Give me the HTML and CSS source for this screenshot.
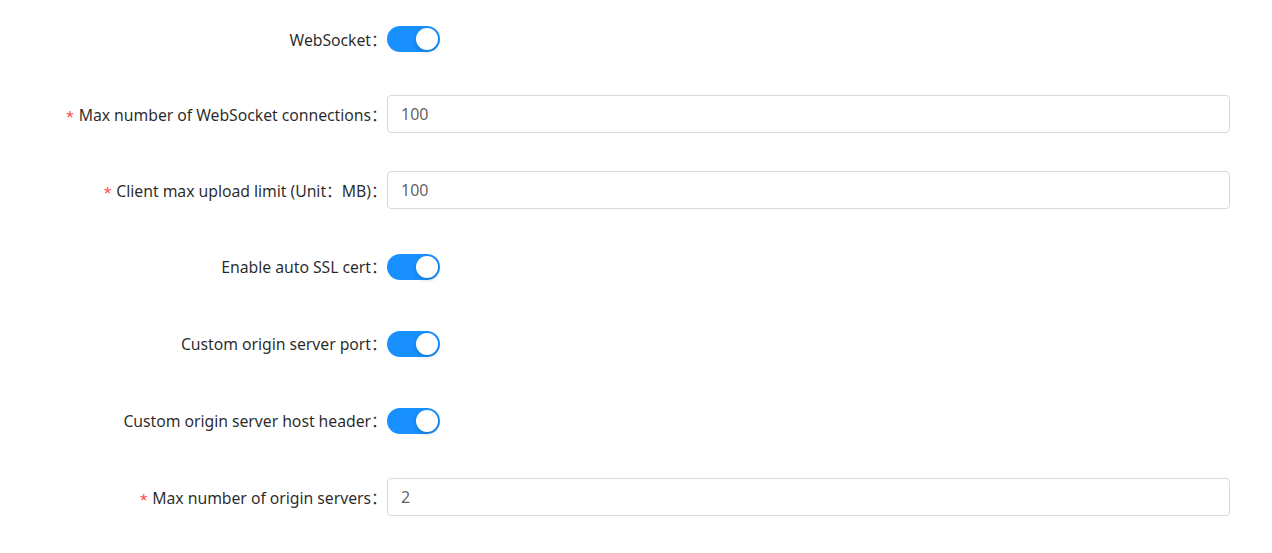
FILE: index.html
```html
<!DOCTYPE html>
<html>
<head>
<meta charset="utf-8">
<link rel="stylesheet" href="styles.css">
</head>
<body>
<form class="form">
  <div class="row row-switch row-first">
    <label class="label">WebSocket<span class="colon">：</span></label>
    <div class="control"><span class="switch"><span class="handle"></span></span></div>
  </div>
  <div class="row row-input">
    <label class="label"><span class="req">*</span>Max number of WebSocket connections<span class="colon">：</span></label>
    <div class="control"><input class="input" type="text" value="100"></div>
  </div>
  <div class="row row-input">
    <label class="label"><span class="req">*</span>Client max upload limit (Unit<span class="colon-in">：</span>MB)<span class="colon">：</span></label>
    <div class="control"><input class="input" type="text" value="100"></div>
  </div>
  <div class="row row-switch">
    <label class="label">Enable auto SSL cert<span class="colon">：</span></label>
    <div class="control"><span class="switch"><span class="handle"></span></span></div>
  </div>
  <div class="row row-switch">
    <label class="label">Custom origin server port<span class="colon">：</span></label>
    <div class="control"><span class="switch"><span class="handle"></span></span></div>
  </div>
  <div class="row row-switch">
    <label class="label">Custom origin server host header<span class="colon">：</span></label>
    <div class="control"><span class="switch"><span class="handle"></span></span></div>
  </div>
  <div class="row row-input">
    <label class="label"><span class="req">*</span>Max number of origin servers<span class="colon">：</span></label>
    <div class="control"><input class="input" type="text" value="2"></div>
  </div>
</form>
</body>
</html>
```
FILE: styles.css
```css
html, body {
  margin: 0;
  padding: 0;
  background: #fff;
}
body {
  font-family: "Noto Sans", "Noto Sans CJK SC", sans-serif;
  font-size: 16px;
  color: rgba(0, 0, 0, 0.85);
}
.form {
  display: flex;
  flex-direction: column;
  gap: 38px;
  padding-top: 21px;
}
.row {
  display: flex;
  align-items: center;
}
.row-switch { height: 39px; }
.row-first { height: 36px; }
.row-input { height: 38px; }
.label {
  flex: 0 0 387px;
  width: 387px;
  box-sizing: border-box;
  text-align: right;
  white-space: nowrap;
  padding-right: 0;
  font-size: 15.8px;
  letter-spacing: -0.05px;
}
.colon {
  display: inline-block;
  width: 16px;
  text-align: left;
  font-family: "Noto Sans CJK SC", sans-serif;
}
.colon-in {
  font-family: "Noto Sans CJK SC", sans-serif;
}
.req {
  display: inline-block;
  color: #ff4d4f;
  font-family: "Liberation Mono", monospace;
  font-size: 19px;
  line-height: 1;
  margin-right: 3px;
  position: relative;
  top: 3px;
}
.control {
  flex: 0 0 843px;
  display: flex;
  align-items: center;
}
.input {
  width: 843px;
  height: 38px;
  box-sizing: border-box;
  border: 1px solid #d9d9d9;
  border-radius: 4px;
  padding: 0 13px;
  font-family: "Noto Sans", sans-serif;
  font-size: 16px;
  color: rgba(0, 0, 0, 0.65);
  outline: none;
  background: #fff;
}
.switch {
  position: relative;
  display: inline-block;
  width: 53px;
  height: 26px;
  border-radius: 13px;
  background: #1890ff;
}
.handle {
  position: absolute;
  top: 2px;
  right: 2px;
  width: 22px;
  height: 22px;
  border-radius: 50%;
  background: #fff;
  box-shadow: 0 2px 4px rgba(0, 35, 11, 0.2);
}
```
